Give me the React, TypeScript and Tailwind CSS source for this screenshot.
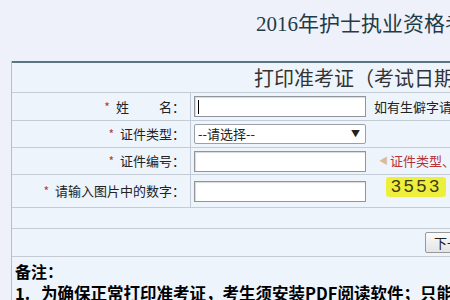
const cjk = { fontFamily: '"Noto Sans CJK SC", "Liberation Sans", sans-serif' }
const serif = { fontFamily: '"Liberation Serif", "Noto Sans CJK SC", serif' }

function Star() {
  return <span className="mr-[6px] text-[12px] text-[#b03a3a]">*</span>
}

function Label({ children }: { children: React.ReactNode }) {
  return (
    <div className="flex h-full w-[179px] shrink-0 items-center justify-end border-r border-[#c3ccd4] pr-[5px] text-[13px] text-[#222]">
      {children}
    </div>
  )
}

function TextBox({ caret = false }: { caret?: boolean }) {
  return (
    <div className="ml-[3px] flex h-[21px] w-[172px] items-center border border-[#8f959a] bg-white pl-[3px] shadow-[inset_1px_1px_1px_rgba(0,0,0,0.15)]">
      {caret && <div className="h-[14px] w-px bg-black" />}
    </div>
  )
}

export default function App() {
  return (
    <div className="h-[300px] w-[450px] overflow-hidden bg-[#eef1fa]" style={cjk}>
      <div className="h-[61px] pl-[256px] pt-[14px] text-[21px] leading-none whitespace-nowrap text-[#1e3c48]" style={serif}>
        2016年护士执业资格考试网上打印准考证
      </div>

      <div className="ml-[11px] w-[640px] border-l border-[#b6c0c8] bg-[#eef4fc]">
        <div className="flex h-[32px] items-center border-t-2 border-b border-t-[#587580] border-b-[#c3ccd4] pl-[242px] text-[20px] whitespace-nowrap text-[#333]">
          打印准考证（考试日期：2016年5月）
        </div>

        <div className="flex h-[28px] items-center border-b border-[#c3ccd4]">
          <Label>
            <Star />
            <span>姓</span>
            <span className="w-[30px]" />
            <span>名：</span>
          </Label>
          <TextBox caret />
          <span className="ml-[8px] text-[13px] whitespace-nowrap text-[#222]">如有生僻字请用拼音代替</span>
        </div>

        <div className="flex h-[27px] items-center border-b border-[#c3ccd4]">
          <Label>
            <Star />
            证件类型：
          </Label>
          <div className="ml-[3px] flex h-[20px] w-[172px] items-center justify-between rounded-[2px] border border-[#9aa0a5] bg-white pr-[5px] pl-[3px] text-[13px] text-[#222]">
            <span>--请选择--</span>
            <span className="text-[9px]">▼</span>
          </div>
        </div>

        <div className="flex h-[27px] items-center border-b border-[#c3ccd4]">
          <Label>
            <Star />
            证件编号：
          </Label>
          <TextBox />
          <span className="ml-[13px] text-[9px] text-[#d8bc94]">◀</span>
          <span className="ml-[2px] text-[13px] whitespace-nowrap text-[#b83232]">证件类型、证件编号</span>
        </div>

        <div className="flex h-[33px] items-center border-b border-[#c3ccd4]">
          <Label>
            <Star />
            请输入图片中的数字：
          </Label>
          <TextBox />
          <div className="mb-[8px] ml-[20px] flex h-[20px] w-[60px] items-center justify-center rounded-[3px] bg-[#eeee3c] text-[18px] tracking-[2px] text-[#3b3b12]" style={{ fontFamily: '"Liberation Mono", monospace' }}>
            3553
          </div>
        </div>

        <div className="h-[21px] border-b border-[#c3ccd4]" />

        <div className="flex h-[28px] items-center border-b border-[#c3ccd4] pl-[413px]">
          <div className="flex h-[21px] items-center rounded-[2px] border border-[#999] bg-gradient-to-b from-[#fbfbfb] to-[#e4e4e4] px-[8px] text-[13px] text-[#222]">
            下一步
          </div>
        </div>

        <div className="pt-[4px] pl-[3px] font-bold text-black">
          <div className="text-[16px] leading-[21px]">备注：</div>
          <div className="flex text-[16.5px] leading-[23px] whitespace-nowrap">
            <span className="w-[26px]">1.</span>
            <span>为确保正常打印准考证，考生须安装PDF阅读软件；只能使用</span>
          </div>
        </div>
      </div>
    </div>
  )
}
